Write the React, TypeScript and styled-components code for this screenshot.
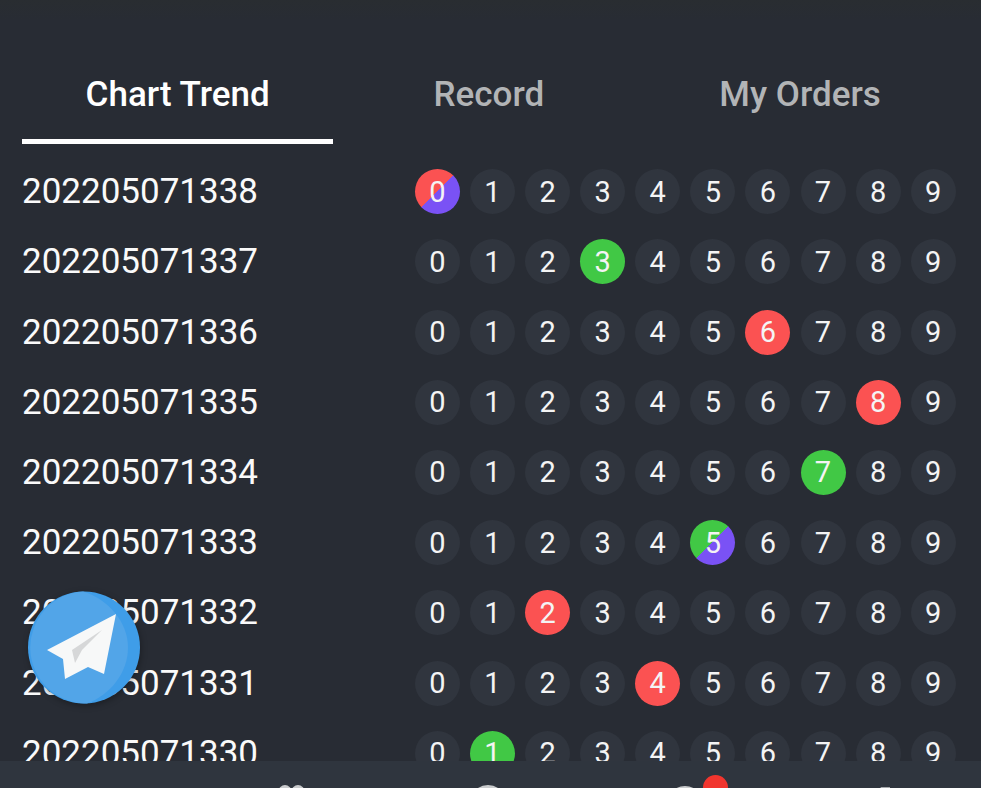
import React from "react";
import styled, { createGlobalStyle } from "styled-components";

const Global = createGlobalStyle`
  html, body { margin: 0; padding: 0; background: #282c34; }
  body { font-family: Roboto, "Liberation Sans", sans-serif; }
`;

const Page = styled.div`
  position: relative;
  width: 981px;
  height: 788px;
  overflow: hidden;
  display: flex;
  flex-direction: column;
  background: #282c34;
  color: #fff;
`;

const TopStrip = styled.div`
  height: 20px;
  flex: none;
  background: linear-gradient(#292d31, #282c34);
`;

const Main = styled.main`
  flex: 1;
  min-height: 0;
  overflow: hidden;
  padding: 0 25.3px 0 22px;
`;

const Tabs = styled.div`
  display: flex;
  height: 124px;
`;

const Tab = styled.div<{ $active?: boolean }>`
  flex: 1;
  display: flex;
  align-items: center;
  justify-content: center;
  padding-top: 29px;
  box-sizing: border-box;
  font-size: 35px;
  font-weight: 500;
  color: ${(p) => (p.$active ? "#ffffff" : "#b2b4b6")};
  border-bottom: 5px solid ${(p) => (p.$active ? "#ffffff" : "transparent")};
`;

const Rows = styled.div`
  padding-top: 12.6px;
`;

const Row = styled.div`
  display: flex;
  align-items: center;
  justify-content: space-between;
  height: 70.2px;
`;

const Period = styled.span`
  font-size: 35px;
  color: #fafafa;
  line-height: 1;
`;

const Balls = styled.div`
  display: flex;
  gap: 10.1px;
`;

const Ball = styled.span<{ $bg: string }>`
  width: 45px;
  height: 45px;
  border-radius: 50%;
  display: flex;
  align-items: center;
  justify-content: center;
  font-size: 29px;
  color: #f4f4f4;
  background: ${(p) => p.$bg};
`;

const BottomNav = styled.nav`
  position: relative;
  flex: none;
  height: 27px;
  background: #2f353e;
  overflow: hidden;
`;

const NavIcon = styled.svg<{ $left: number }>`
  position: absolute;
  left: ${(p) => p.$left}px;
  top: 20px;
`;

const Badge = styled.span`
  position: absolute;
  left: 703px;
  top: 14px;
  width: 25px;
  height: 25px;
  border-radius: 50%;
  background: #f1352e;
`;

const Telegram = styled.svg`
  position: absolute;
  left: 28px;
  top: 591px;
  filter: drop-shadow(1px 2px 3px rgba(0, 0, 0, 0.3));
`;

const RED = "#fb5252";
const GREEN = "#41c845";
const PURPLE = "#7a52f5";
const PLAIN = "#30353e";

const split = (a: string) =>
  `linear-gradient(135deg, ${a} 0 50%, ${PURPLE} 50% 100%)`;

const data: { id: string; n: number; bg: string }[] = [
  { id: "202205071338", n: 0, bg: split(RED) },
  { id: "202205071337", n: 3, bg: GREEN },
  { id: "202205071336", n: 6, bg: RED },
  { id: "202205071335", n: 8, bg: RED },
  { id: "202205071334", n: 7, bg: GREEN },
  { id: "202205071333", n: 5, bg: split(GREEN) },
  { id: "202205071332", n: 2, bg: RED },
  { id: "202205071331", n: 4, bg: RED },
  { id: "202205071330", n: 1, bg: GREEN },
];

const digits = [0, 1, 2, 3, 4, 5, 6, 7, 8, 9];

export default function App() {
  return (
    <Page>
      <Global />
      <TopStrip />
      <Main>
        <Tabs>
          <Tab $active>Chart Trend</Tab>
          <Tab>Record</Tab>
          <Tab>My Orders</Tab>
        </Tabs>
        <Rows>
          {data.map((r) => (
            <Row key={r.id}>
              <Period>{r.id}</Period>
              <Balls>
                {digits.map((d) => (
                  <Ball key={d} $bg={d === r.n ? r.bg : PLAIN}>
                    {d}
                  </Ball>
                ))}
              </Balls>
            </Row>
          ))}
        </Rows>
      </Main>
      <BottomNav>
        <NavIcon $left={274} width="36" height="12" viewBox="0 0 36 12">
          <circle cx="11" cy="10.5" r="6.5" fill="#c9cbcd" />
          <circle cx="24" cy="10.5" r="6.5" fill="#c9cbcd" />
        </NavIcon>
        <NavIcon $left={469} width="38" height="12" viewBox="0 0 38 12">
          <circle cx="19" cy="22" r="16" fill="none" stroke="#c9cbcd" strokeWidth="4" />
        </NavIcon>
        <NavIcon $left={666} width="38" height="12" viewBox="0 0 38 12">
          <circle cx="19" cy="23" r="16" fill="none" stroke="#c9cbcd" strokeWidth="4" />
        </NavIcon>
        <NavIcon $left={870} width="20" height="12" viewBox="0 0 20 12">
          <path d="M7 12 L11 6 L20 6 L20 12 Z" fill="#a4a7ab" />
        </NavIcon>
        <Badge />
      </BottomNav>
      <Telegram width="113" height="114" viewBox="0 0 113 114">
        <circle cx="56" cy="56.5" r="56" fill="#3f9de8" />
        <path d="M55 .5 A56 56 0 0 0 59 112.4 C82 104 100 82 100 56.5 C100 31 80 8 55 .5 Z" fill="#52a5e8" />
        <path d="M88 23 L19 59 L35 68 L37 88 L60 76 L76 83 Z" fill="#f7f8f8" />
        <path d="M74 39 L44 59 L47 72 L54 59 Z" fill="#d6d7d8" />
      </Telegram>
    </Page>
  );
}
